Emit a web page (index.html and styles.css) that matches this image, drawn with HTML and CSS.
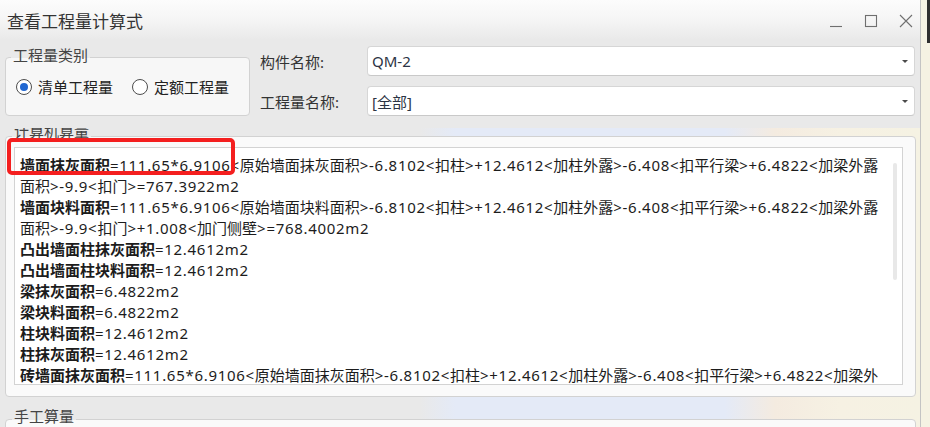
FILE: index.html
```html
<!DOCTYPE html>
<html>
<head>
  <meta charset="UTF-8">
  <meta name="viewport" content="width=device-width, initial-scale=1.0">
  <link rel="stylesheet" href="styles.css">
</head>
<body>
  <div class="window">
    <div class="titlebar">
      <span class="title">查看工程量计算式</span>
      <div class="controls">
        <svg width="14" height="14" viewBox="0 0 14 14"><path d="M1 12.5h12" /></svg>
        <svg width="14" height="14" viewBox="0 0 14 14"><rect x="1.5" y="1.5" width="11" height="11" /></svg>
        <svg width="14" height="14" viewBox="0 0 14 14"><path d="M1 1l12 12M13 1L1 13" /></svg>
      </div>
    </div>

    <div class="top">
      <div class="group group-type">
        <span class="group-title">工程量类别</span>
        <label class="radio checked"><span class="radio-mark"></span>清单工程量</label>
        <label class="radio"><span class="radio-mark"></span>定额工程量</label>
      </div>
      <div class="fields">
        <div class="field">
          <span class="field-label">构件名称:</span>
          <div class="combo"><span class="combo-value">QM-2</span><span class="arrow"></span></div>
        </div>
        <div class="field">
          <span class="field-label">工程量名称:</span>
          <div class="combo"><span class="combo-value">[全部]</span><span class="arrow"></span></div>
        </div>
      </div>
    </div>

    <div class="results">
      <div class="group group-calc">
        <span class="group-title">计算机算量</span>
        <div class="formula-box">
          <div class="line"><b>墙面抹灰面积</b><span class="n">=111.65*6.9106&lt;</span>原始墙面抹灰面积<span class="n">&gt;-6.8102&lt;</span>扣柱<span class="n">&gt;+12.4612&lt;</span>加柱外露<span class="n">&gt;-6.408&lt;</span>扣平行梁<span class="n">&gt;+6.4822&lt;</span>加梁外露</div>
          <div class="line">面积<span class="n">&gt;-9.9&lt;</span>扣门<span class="n">&gt;=767.3922m2</span></div>
          <div class="line"><b>墙面块料面积</b><span class="n">=111.65*6.9106&lt;</span>原始墙面块料面积<span class="n">&gt;-6.8102&lt;</span>扣柱<span class="n">&gt;+12.4612&lt;</span>加柱外露<span class="n">&gt;-6.408&lt;</span>扣平行梁<span class="n">&gt;+6.4822&lt;</span>加梁外露</div>
          <div class="line">面积<span class="n">&gt;-9.9&lt;</span>扣门<span class="n">&gt;+1.008&lt;</span>加门侧壁<span class="n">&gt;=768.4002m2</span></div>
          <div class="line"><b>凸出墙面柱抹灰面积</b><span class="n">=12.4612m2</span></div>
          <div class="line"><b>凸出墙面柱块料面积</b><span class="n">=12.4612m2</span></div>
          <div class="line"><b>梁抹灰面积</b><span class="n">=6.4822m2</span></div>
          <div class="line"><b>梁块料面积</b><span class="n">=6.4822m2</span></div>
          <div class="line"><b>柱块料面积</b><span class="n">=12.4612m2</span></div>
          <div class="line"><b>柱抹灰面积</b><span class="n">=12.4612m2</span></div>
          <div class="line"><b>砖墙面抹灰面积</b><span class="n">=111.65*6.9106&lt;</span>原始墙面抹灰面积<span class="n">&gt;-6.8102&lt;</span>扣柱<span class="n">&gt;+12.4612&lt;</span>加柱外露<span class="n">&gt;-6.408&lt;</span>扣平行梁<span class="n">&gt;+6.4822&lt;</span>加梁外</div>
          <span class="scroll-thumb"></span>
        </div>
      </div>

      <div class="group group-manual">
        <span class="group-title">手工算量</span>
      </div>
    </div>

    <div class="highlight"></div>
  </div>

  <div class="backdrop">
    <div class="backdrop-edge"></div>
  </div>
</body>
</html>
```

FILE: styles.css
```css
* {
  box-sizing: border-box;
}

body {
  margin: 0;
  height: 427px;
  overflow: hidden;
  display: flex;
  background: #f5f2e3;
  font-family: "Noto Sans", "Noto Sans CJK SC", sans-serif;
  color: #222;
}

.window {
  position: relative;
  flex-shrink: 0;
  width: 921px;
  height: 427px;
  background: #e9e9e9;
  border-right: 1px solid #c4c4c4;
  overflow: hidden;
}

.titlebar {
  height: 40px;
  display: flex;
  align-items: center;
  padding-left: 7px;
  background: linear-gradient(#fcfcfc, #f6f6f6 45%, #e9e9e9);
}

.title {
  font-size: 17px;
  line-height: 1;
  color: #333;
  font-family: "Noto Sans CJK SC", sans-serif;
}

.controls {
  margin-left: auto;
  display: flex;
  gap: 21px;
  padding: 2px 7px 0 0;
}

.controls svg {
  fill: none;
  stroke: #6f6f6f;
  stroke-width: 1.1;
}

/* top row: radio group + combo boxes */
.top {
  display: flex;
  height: 88px;
  padding-left: 5px;
}

.group {
  position: relative;
  border: 1px solid #d2d2d2;
  border-radius: 4px;
  background: #f7f7f7;
}

.group-title {
  position: absolute;
  left: 6px;
  padding: 0 2px;
  font-size: 15px;
  line-height: 18px;
  color: #444;
  white-space: nowrap;
}

.group-type {
  margin-top: 17px;
  width: 245px;
  height: 59px;
  display: flex;
  align-items: center;
  padding-left: 10px;
}

.group-type .group-title {
  left: 5px;
  top: -12px;
  background: linear-gradient(#e9e9e9 0 12px, transparent 12px);
}

.radio {
  display: flex;
  align-items: center;
  gap: 6px;
  font-size: 15px;
  line-height: 18px;
  color: #222;
}

.radio + .radio {
  margin-left: 19px;
}

.radio-mark {
  position: relative;
  width: 16px;
  height: 16px;
  border: 1px solid #4d4d4d;
  border-radius: 50%;
  background: #fff;
}

.radio.checked .radio-mark::after {
  content: "";
  position: absolute;
  left: 3px;
  top: 3px;
  width: 8px;
  height: 8px;
  border-radius: 50%;
  background: #2167d1;
}

.fields {
  margin: 6px 0 0 10px;
  display: flex;
  flex-direction: column;
  gap: 10px;
}

.field {
  display: flex;
  align-items: center;
  height: 30px;
}

.field-label {
  width: 107px;
  font-size: 15px;
  color: #333;
}

.combo {
  width: 548px;
  height: 30px;
  display: flex;
  align-items: center;
  padding: 0 6px 0 4px;
  border: 1px solid #d6d6d6;
  border-bottom-color: #c9c9c9;
  border-radius: 4px;
  background: #fff;
  font-size: 15px;
  color: #2c3444;
}

.combo-value {
  flex: 1;
}

.arrow {
  width: 0;
  height: 0;
  border-left: 3px solid transparent;
  border-right: 3px solid transparent;
  border-top: 3px solid #4a4a4a;
}

/* lower area */
.results {
  height: 299px;
  overflow: hidden;
  padding: 8px 0 0 5px;
  background: linear-gradient(90deg, #e9e9e9 0, #e9e9e9 420px, #e4eaf7 455px, #e4eaf7 725px, #f4ebe0 775px, #f6f1e3 840px, #f5f2e3 920px);
}

.group-calc {
  width: 911px;
  height: 261px;
  padding: 10px 0 0 8px;
  background: #fafafa;
}

.group-calc .group-title {
  top: -15px;
  background: linear-gradient(#e9e9e9 0 15px, transparent 15px);
}

.formula-box {
  position: relative;
  width: 889px;
  height: 238px;
  padding: 7px 0 0 5px;
  border: 1px solid #d3d3d3;
  background: #fff;
  overflow: hidden;
  font-size: 15px;
  line-height: 21px;
  color: #1c1c1c;
}

.line {
  white-space: nowrap;
}

.line b {
  font-weight: 700;
}

.line .n {
  letter-spacing: 0.7px;
}

.scroll-thumb {
  position: absolute;
  top: 15px;
  right: 5px;
  width: 4px;
  height: 117px;
  border-radius: 2px;
  background: #e8e8e8;
}

.group-manual {
  margin-top: 22px;
  width: 911px;
  height: 40px;
  background: #fafafa;
}

.group-manual .group-title {
  top: -13px;
  background: linear-gradient(#e9e9e9 0 13px, transparent 13px);
}

.highlight {
  position: absolute;
  left: 7px;
  top: 138px;
  width: 228px;
  height: 37px;
  border: 4px solid #f41f1f;
  border-radius: 5px;
}

.backdrop {
  flex: 1;
  display: flex;
  justify-content: flex-end;
}

.backdrop-edge {
  width: 3px;
  height: 43px;
  background: #2e2e2e;
}
```
